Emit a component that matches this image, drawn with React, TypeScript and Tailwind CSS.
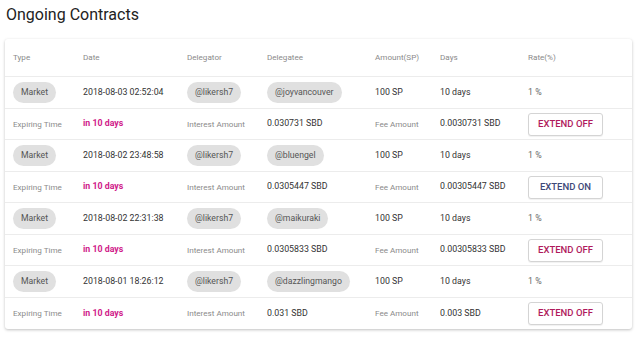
import React from 'react';

interface Contract {
  date: string;
  delegatee: string;
  interest: string;
  fee: string;
  extend: boolean;
}

const CONTRACTS: Contract[] = [
  { date: '2018-08-03 02:52:04', delegatee: '@joyvancouver', interest: '0.030731 SBD', fee: '0.0030731 SBD', extend: false },
  { date: '2018-08-02 23:48:58', delegatee: '@bluengel', interest: '0.0305447 SBD', fee: '0.00305447 SBD', extend: true },
  { date: '2018-08-02 22:31:38', delegatee: '@maikuraki', interest: '0.0305833 SBD', fee: '0.00305833 SBD', extend: false },
  { date: '2018-08-01 18:26:12', delegatee: '@dazzlingmango', interest: '0.031 SBD', fee: '0.003 SBD', extend: false },
];

const GRID = 'grid grid-cols-[70px_104px_80px_108px_65px_88px_1fr] items-center pl-[8px] border-b border-[#ececec]';

const Chip: React.FC<{ children: React.ReactNode }> = ({ children }) => (
  <span className="inline-flex h-[21px] items-center rounded-full bg-[#e0e0e0] px-[8px] text-[8.7px] text-[#555]">
    {children}
  </span>
);

export default function App() {
  return (
    <div className="h-[338px] w-[639px] bg-white font-['Roboto',sans-serif] text-[#333]">
      <h1 className="pl-[6px] pt-[3px] text-[16px] leading-[24px] text-[#222]">Ongoing Contracts</h1>

      <div className="ml-[5px] mt-[12px] w-[627px] overflow-hidden rounded-[3px] bg-white shadow-[0_1px_3px_rgba(0,0,0,0.25)]">
        {/* header */}
        <div className={`${GRID} h-[38px] text-[8.1px] text-[#8a8a8a]`}>
          <span>Type</span>
          <span>Date</span>
          <span>Delegator</span>
          <span>Delegatee</span>
          <span>Amount(SP)</span>
          <span>Days</span>
          <span>Rate(%)</span>
        </div>

        {CONTRACTS.map((c, i) => (
          <React.Fragment key={i}>
            <div className={`${GRID} h-[32px] text-[8.8px] text-[#333]`}>
              <span><Chip>Market</Chip></span>
              <span>{c.date}</span>
              <span><Chip>@likersh7</Chip></span>
              <span><Chip>{c.delegatee}</Chip></span>
              <span>100 SP</span>
              <span>10 days</span>
              <span className="text-[#666]">1 %</span>
            </div>
            <div className={`${GRID} h-[31px] text-[8.8px] text-[#333] ${i === CONTRACTS.length - 1 ? 'border-b-0' : ''}`}>
              <span className="text-[8.1px] text-[#8a8a8a]">Expiring Time</span>
              <span className="font-bold text-[#d0208a]">in 10 days</span>
              <span className="text-[8.1px] text-[#8a8a8a]">Interest Amount</span>
              <span>{c.interest}</span>
              <span className="text-[8.1px] text-[#8a8a8a]">Fee Amount</span>
              <span>{c.fee}</span>
              <span>
                <button
                  className={`flex h-[23px] w-[75px] items-center justify-center rounded-[3px] border border-[#d4d4d4] bg-white text-[9.5px] font-medium shadow-[0_1px_1px_rgba(0,0,0,0.06)] ${
                    c.extend ? 'text-[#3d4878]' : 'text-[#b01a5c]'
                  }`}
                >
                  {c.extend ? 'EXTEND ON' : 'EXTEND OFF'}
                </button>
              </span>
            </div>
          </React.Fragment>
        ))}
      </div>
    </div>
  );
}
